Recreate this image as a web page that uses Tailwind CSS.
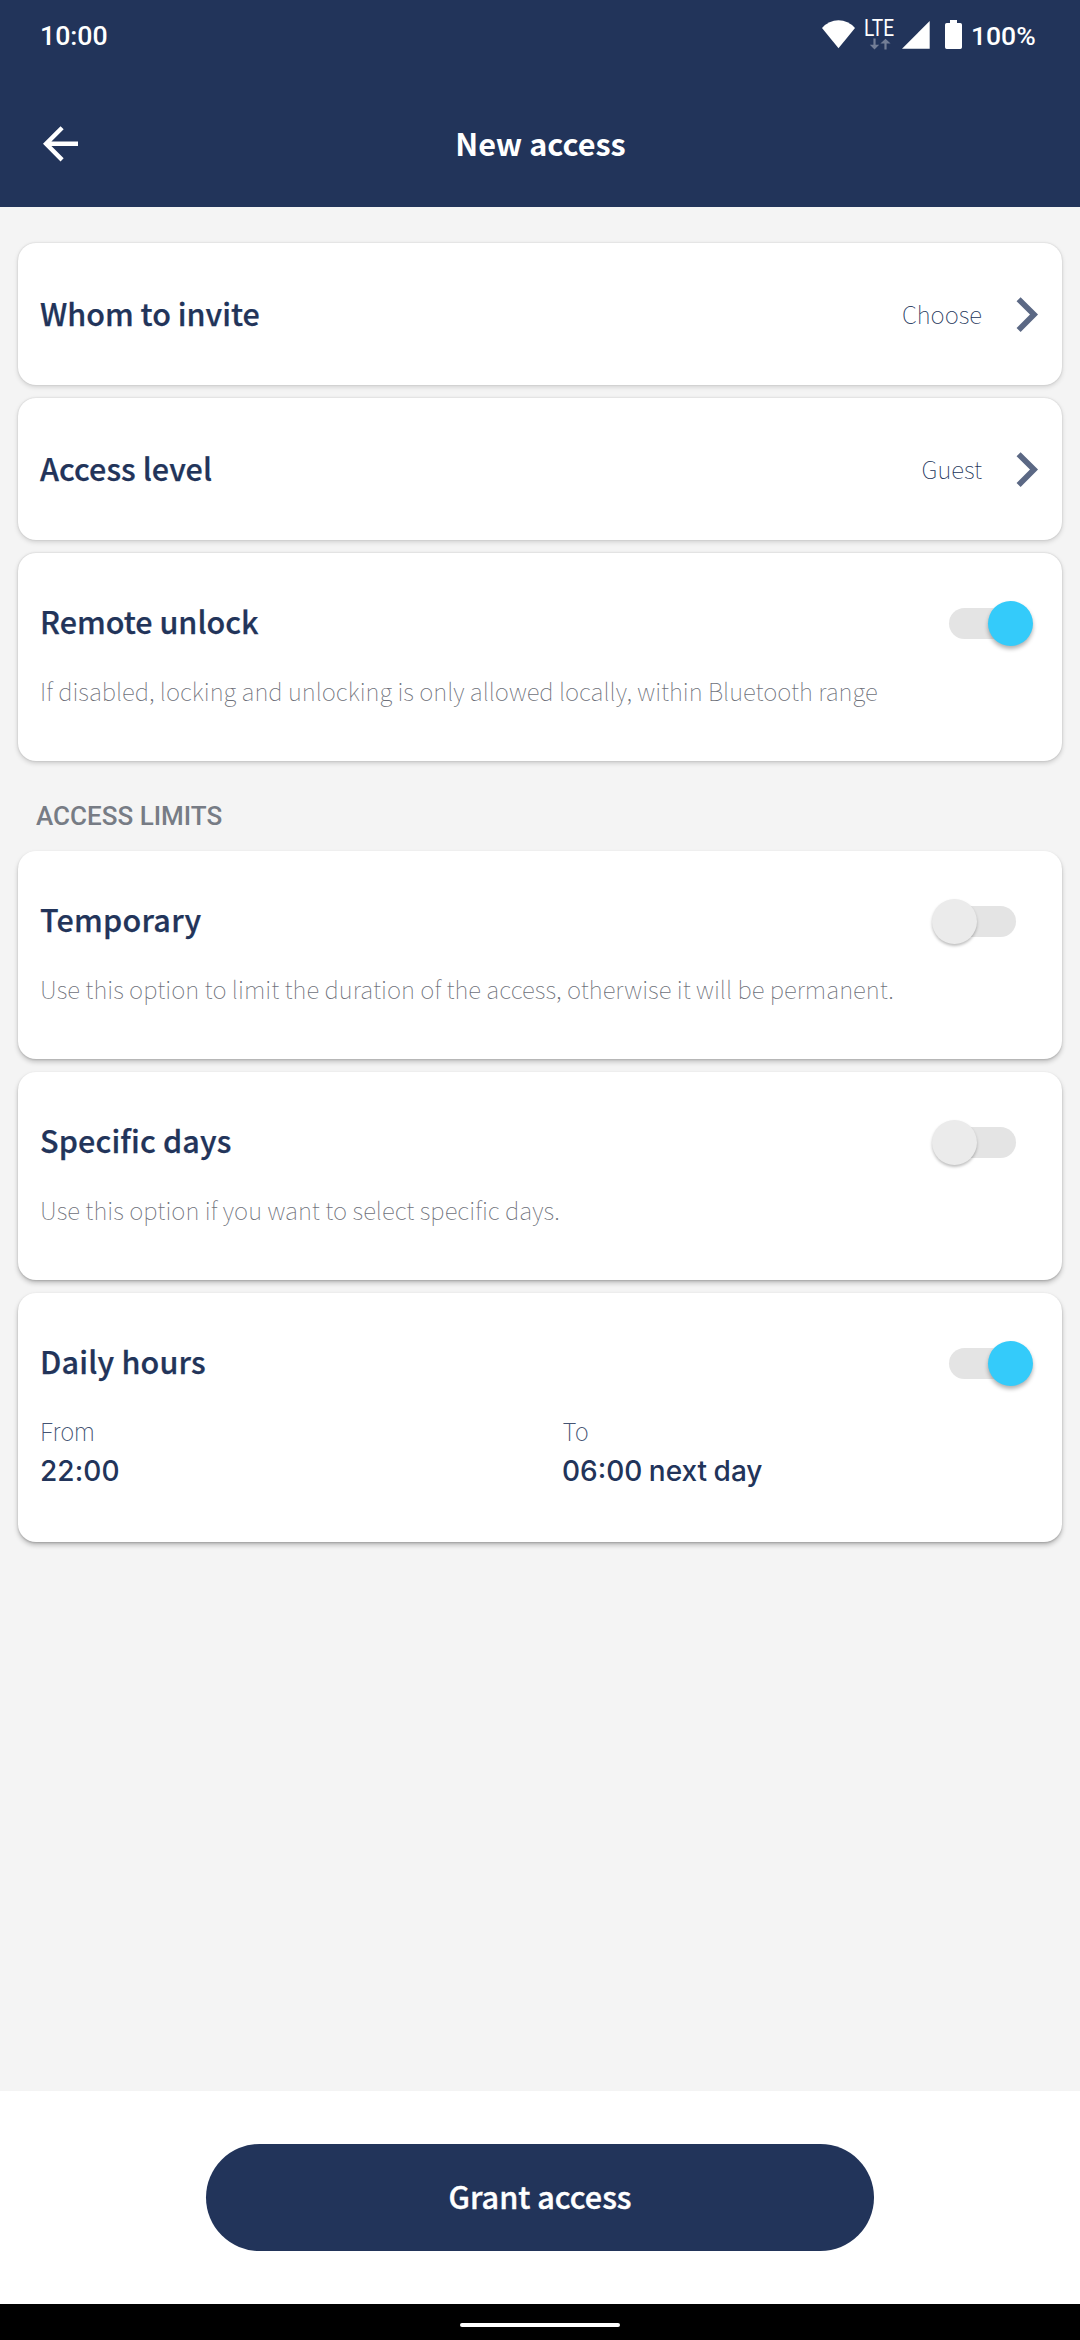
<!DOCTYPE html>
<html lang="en">
<head>
<meta charset="utf-8">
<title>New access</title>
<script src="https://cdn.jsdelivr.net/npm/@tailwindcss/browser@4"></script>
</head>
<body class="flex h-[2340px] w-[1080px] flex-col overflow-hidden bg-[#f4f4f4] font-['Noto_Sans_CJK_SC',sans-serif] text-[#22345a]">
  <header class="flex h-[207px] shrink-0 flex-col bg-[#22345a] text-white">
    <div class="flex h-[72px] items-start justify-between pl-[40px] pr-[44px] font-[Roboto,sans-serif] font-medium">
      <span class="pt-[20px] text-[26.7px] leading-[32px]">10:00</span>
      <div class="flex gap-[6px]">
        <svg class="h-[72px] w-[145px]" viewBox="820 0 145 72" fill="#fff">
          <path d="M838.5 48.3 L822 28 Q829 20.3 838.5 20.3 Q848 20.3 855 28 Z"/>
          <text x="864" y="35.8" font-family="Roboto" font-weight="400" font-size="23" textLength="30" lengthAdjust="spacingAndGlyphs">LTE</text>
          <g fill="#737e96"><path d="M873.4 38.6h2.2v6.2h3.6l-4.7 4.7-4.7-4.7h3.6z"/><path d="M884.4 49.6h2.2v-6.2h4l-5.1-4.7-5.1 4.7h4z"/></g>
          <path d="M902 48.7 L929.7 21 V48.7Z"/>
          <path d="M950 20h7v3h3.3a1.7 1.7 0 0 1 1.7 1.7v22.6a1.7 1.7 0 0 1-1.7 1.7h-13.6a1.7 1.7 0 0 1-1.7-1.7v-22.6a1.7 1.7 0 0 1 1.7-1.7h3.3z"/>
        </svg>
        <span class="w-[65px] whitespace-nowrap pt-[20px] text-[26.5px] leading-[32px]">100%</span>
      </div>
    </div>
    <div class="grid grid-cols-[120px_1fr_120px] items-start">
      <svg class="ml-[40px] mt-[52px] h-[40px] w-[40px]" viewBox="40 124 40 40" fill="none" stroke="#fff" stroke-width="4.4"><path d="M62.1 127.7 46.1 143.8 62.1 159.9M46.5 143.8H78"/></svg>
      <h1 class="mt-[49px] pl-[1px] text-center text-[30.6px] font-bold leading-[44px]">New access</h1>
    </div>
  </header>

  <main class="flex flex-1 flex-col px-[18px] pt-[36px]">
    <section class="flex h-[142px] items-center rounded-[18px] bg-white pb-[2px] pl-[22px] pr-[23px] shadow-[0_2px_5px_rgba(0,0,0,0.14),0_0_2px_rgba(0,0,0,0.16)]">
      <h2 class="flex-1 text-[30.5px] font-medium leading-[44px] [-webkit-text-stroke:0.25px_#22345a]">Whom to invite</h2>
      <span class="text-[24px] font-thin leading-[35px]">Choose</span>
      <svg class="ml-[33px] mt-[2px] h-[37px] w-[24px]" viewBox="0 0 24 37" fill="none" stroke="#5b6884" stroke-width="5.7"><path d="M3.6 3.2 19 18.6 3.6 34"/></svg>
    </section>

    <section class="mt-[13px] flex h-[142px] items-center rounded-[18px] bg-white pb-[2px] pl-[22px] pr-[23px] shadow-[0_2px_5px_rgba(0,0,0,0.15),0_0_2px_rgba(0,0,0,0.16)]">
      <h2 class="flex-1 text-[30.5px] font-medium leading-[44px] tracking-[0.05px] [-webkit-text-stroke:0.25px_#22345a]">Access level</h2>
      <span class="text-[24px] font-thin leading-[35px]">Guest</span>
      <svg class="ml-[33px] mt-[2px] h-[37px] w-[24px]" viewBox="0 0 24 37" fill="none" stroke="#5b6884" stroke-width="5.7"><path d="M3.6 3.2 19 18.6 3.6 34"/></svg>
    </section>

    <section class="mt-[13px] h-[208px] rounded-[18px] bg-white pl-[22px] pr-[46px] pt-[46px] shadow-[0_2px_5px_rgba(0,0,0,0.18),0_0_2px_rgba(0,0,0,0.16)]">
      <div class="flex h-[44px] justify-between">
        <h2 class="text-[30.5px] font-medium leading-[44px] [-webkit-text-stroke:0.25px_#22345a]">Remote unlock</h2>
        <div class="relative mt-[9px] h-[31px] w-[67px] rounded-full bg-[#e4e4e4]"><div class="absolute left-[38.5px] top-[-7.5px] size-[45px] rounded-full bg-[#34cbfa] shadow-[0_3px_4px_rgba(0,0,0,0.3)]"></div></div>
      </div>
      <p class="mt-[30px] whitespace-nowrap text-[24px] font-thin leading-[35px] text-[#6d7079]">If disabled, locking and unlocking is only allowed locally, within Bluetooth range</p>
    </section>

    <h3 class="mb-[20px] mt-[40px] pl-[18px] font-[Roboto,sans-serif] text-[26px] font-medium leading-[30px] text-[#777c85]">ACCESS LIMITS</h3>

    <section class="h-[208px] rounded-[18px] bg-white pl-[22px] pr-[46px] pt-[46px] shadow-[0_3px_5px_rgba(0,0,0,0.2),0_1px_2px_rgba(0,0,0,0.14)]">
      <div class="flex h-[44px] justify-between">
        <h2 class="text-[30.5px] font-medium leading-[44px] tracking-[0.25px] [-webkit-text-stroke:0.25px_#22345a]">Temporary</h2>
        <div class="relative mt-[9px] h-[31px] w-[67px] rounded-full bg-[#e4e4e4]"><div class="absolute left-[-17.5px] top-[-7.5px] size-[45px] rounded-full bg-[#ebebeb] shadow-[0_2px_3px_rgba(0,0,0,0.25)]"></div></div>
      </div>
      <p class="mt-[30px] whitespace-nowrap text-[24px] font-thin leading-[35px] tracking-[0.04px] text-[#6d7079]">Use this option to limit the duration of the access, otherwise it will be permanent.</p>
    </section>

    <section class="mt-[13px] h-[208px] rounded-[18px] bg-white pl-[22px] pr-[46px] pt-[46px] shadow-[0_3px_5px_rgba(0,0,0,0.22),0_1px_2px_rgba(0,0,0,0.16)]">
      <div class="flex h-[44px] justify-between">
        <h2 class="text-[30.5px] font-medium leading-[44px] tracking-[0.15px] [-webkit-text-stroke:0.25px_#22345a]">Specific days</h2>
        <div class="relative mt-[9px] h-[31px] w-[67px] rounded-full bg-[#e4e4e4]"><div class="absolute left-[-17.5px] top-[-7.5px] size-[45px] rounded-full bg-[#ebebeb] shadow-[0_2px_3px_rgba(0,0,0,0.25)]"></div></div>
      </div>
      <p class="mt-[30px] whitespace-nowrap text-[24px] font-thin leading-[35px] tracking-[0.05px] text-[#6d7079]">Use this option if you want to select specific days.</p>
    </section>

    <section class="mt-[13px] h-[249px] rounded-[18px] bg-white pl-[22px] pr-[46px] pt-[46px] shadow-[0_3px_5px_rgba(0,0,0,0.24),0_1px_2px_rgba(0,0,0,0.18)]">
      <div class="flex h-[44px] justify-between">
        <h2 class="text-[30.5px] font-medium leading-[44px] tracking-[0.2px] [-webkit-text-stroke:0.25px_#22345a]">Daily hours</h2>
        <div class="relative mt-[9px] h-[31px] w-[67px] rounded-full bg-[#e4e4e4]"><div class="absolute left-[38.5px] top-[-7.5px] size-[45px] rounded-full bg-[#34cbfa] shadow-[0_3px_4px_rgba(0,0,0,0.3)]"></div></div>
      </div>
      <div class="mt-[35px] grid grid-cols-[522px_1fr] font-[Inter,sans-serif]">
        <div>
          <div class="text-[24px] font-extralight leading-[30px] tracking-[-0.3px] text-[#22345a]/85">From</div>
          <div class="mt-[6px] text-[28px] font-medium leading-[34px] tracking-[0.1px]">22:00</div>
        </div>
        <div>
          <div class="text-[24px] font-extralight leading-[30px] tracking-[-0.4px] text-[#22345a]/85">To</div>
          <div class="mt-[6px] whitespace-nowrap text-[28px] font-medium leading-[34px] [word-spacing:-1px]">06:00 next day</div>
        </div>
      </div>
    </section>
  </main>

  <footer class="flex h-[213px] shrink-0 items-start justify-center bg-white pt-[53px]">
    <button class="h-[107px] w-[668px] rounded-full bg-[#22345a] pb-[4px] text-[30.6px] font-medium leading-[44px] text-white [-webkit-text-stroke:0.4px_#fff]">Grant access</button>
  </footer>
  <div class="flex h-[36px] shrink-0 justify-center bg-black pt-[19px]"><div class="h-[4px] w-[160px] rounded-full bg-white"></div></div>
</body>
</html>
